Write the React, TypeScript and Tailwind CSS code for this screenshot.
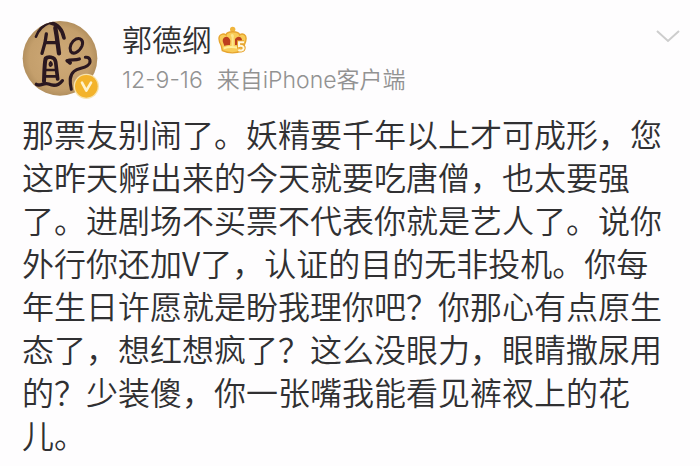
function Avatar() {
  return (
    <svg
      viewBox="36 30 240 240"
      className="size-20 shrink-0"
      role="img"
      aria-label="郭德纲的头像，已认证"
    >
      <defs>
        <radialGradient id="paper" cx="50%" cy="50%" r="55%">
          <stop offset="0" stopColor="#cfaa78" />
          <stop offset="0.75" stopColor="#c49f6c" />
          <stop offset="1" stopColor="#a98757" />
        </radialGradient>
        <clipPath id="disc">
          <circle cx="150" cy="145" r="112" />
        </clipPath>
      </defs>
      <circle cx="150" cy="145" r="112" fill="url(#paper)" />
      <g
        clipPath="url(#disc)"
        fill="none"
        stroke="#2b1820"
        strokeLinecap="round"
        strokeLinejoin="round"
      >
        <path d="M78 80 C84 62 98 46 118 38" strokeWidth="8" />
        <path d="M120 38 C142 42 157 59 162 84" strokeWidth="11" />
        <path d="M109 72 L105 98 L96 130" strokeWidth="10" />
        <path d="M136 54 L140 78 L147 130" strokeWidth="13" />
        <path d="M106 98 H141" strokeWidth="10" />
        <path d="M107 146 C103 160 103 190 102 214" strokeWidth="12" />
        <path d="M107 146 C112 139 135 138 137 156 L143 207" strokeWidth="11" />
        <path d="M122 156 C117 160 118 167 122 168 C127 165 127 160 122 156" strokeWidth="6" />
        <path d="M107 180 H138 M106 199 H138" strokeWidth="8" />
        <path d="M79 223 C92 231 100 216 116 222 C130 228 146 226 157 212" strokeWidth="10" />
        <path d="M198 87 C184 94 177 110 182 124 C190 136 208 126 216 108 C222 92 212 82 198 87 Z" strokeWidth="9" />
        <path d="M171 152 C183 147 195 152 208 147" strokeWidth="10" />
        <path d="M174 153 L180 158" strokeWidth="12" />
        <path d="M226 142 C242 140 245 158 232 167 C219 176 204 174 192 184 C177 197 179 216 184 238" strokeWidth="9" />
      </g>
      <circle cx="229" cy="229" r="38" fill="#f7e3ae" />
      <circle cx="229" cy="229" r="34" fill="#f3b32c" />
      <path
        d="M216 218 L229 242 L243 218"
        fill="none"
        stroke="#fff2cd"
        strokeWidth="8"
        strokeLinecap="round"
        strokeLinejoin="round"
      />
    </svg>
  );
}

function CrownBadge() {
  return (
    <svg viewBox="320 34 87 84" className="mt-1 h-7 w-[29px]" role="img" aria-label="会员">
      <circle cx="364" cy="44" r="8" fill="#f0b53c" />
      <path
        d="M323 73 C322 59 336 55 344 61 C347 48 382 48 385 61 C394 54 406 61 404 74 C404 84 397 91 396 100 L394 108 C375 116 351 116 333 108 L330 94 C326 87 323 81 323 73 Z"
        fill="#f8cb57"
        stroke="#e7a52f"
        strokeWidth="4"
      />
      <path d="M335 73 C342 62 354 66 357 78 L356 91 C349 91 344 92 339 94 C338 86 332 82 335 73 Z" fill="#bd3f1e" />
      <path d="M371 74 C376 63 390 64 392 75 C391 82 386 83 384 92 L371 91 Z" fill="#bd3f1e" />
      <path d="M358 61 C363 54 370 60 367 69 V94 H361 V69 Z" fill="#fce58b" />
      <path d="M337 101 C350 96 365 96 380 99" stroke="#fff09a" strokeWidth="6" fill="none" />
      <path
        d="M398 83 H383 V94 C391 91 398 95 397 101 C396 108 387 109 381 106"
        fill="none"
        stroke="#e6a22c"
        strokeWidth="12"
      />
      <path
        d="M398 83 H383 V94 C391 91 398 95 397 101 C396 108 387 109 381 106"
        fill="none"
        stroke="#fff8df"
        strokeWidth="6"
      />
    </svg>
  );
}

export default function App() {
  return (
    <article
      lang="zh-CN"
      className="min-h-screen bg-[#fefdfe] px-[22px] pt-5 font-['Noto_Sans_CJK_SC',sans-serif] text-[#303032]"
    >
      <header className="flex items-start">
        <Avatar />
        <div className="ml-5 flex-1">
          <div className="flex items-center gap-1.5">
            <h1 className="text-[30px] leading-9 font-[350]">郭德纲</h1>
            <CrownBadge />
          </div>
          <p className="mt-1 flex gap-3.5 font-['Inter','Noto_Sans_CJK_SC',sans-serif] text-[23px] leading-10 font-[350] text-[#929292]">
            <time dateTime="2012-09-16">12-9-16</time>
            <span>来自iPhone客户端</span>
          </p>
        </div>
        <button type="button" aria-label="更多" className="mt-1 -mr-1.5 p-1">
          <svg viewBox="0 0 24 16" className="h-4 w-6" fill="none" stroke="#cdcdcd" strokeWidth="2">
            <path d="M1 3 L12 13 L23 3" />
          </svg>
        </button>
      </header>
      <p className="mt-3 text-[32px] leading-[43px] font-[350]">
        那票友别闹了。妖精要千年以上才可成形，您这昨天孵出来的今天就要吃唐僧，也太要强了。进剧场不买票不代表你就是艺人了。说你外行你还加V了，认证的目的无非投机。你每年生日许愿就是盼我理你吧？你那心有点原生态了，想红想疯了？这么没眼力，眼睛撒尿用的？少装傻，你一张嘴我能看见裤衩上的花儿。
      </p>
    </article>
  );
}
